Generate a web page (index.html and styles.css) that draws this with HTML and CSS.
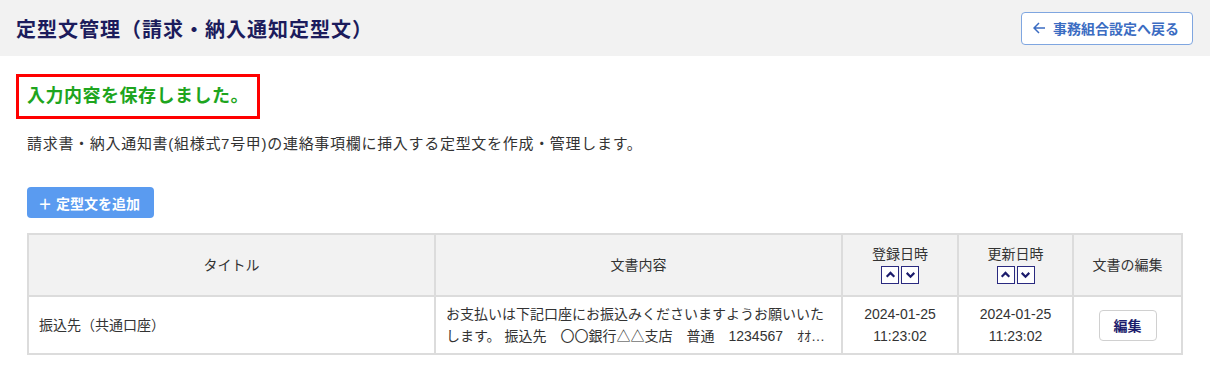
FILE: index.html
```html
<!DOCTYPE html>
<html lang="ja">
    <head>
        <meta charset="UTF-8">
        <meta name="viewport" content="width=device-width, initial-scale=1.0">
        <title>定型文管理</title>
        <link rel="stylesheet" href="styles.css">
    </head>
    <body>
        <div class="page-header">
            <h1>定型文管理（請求・納入通知定型文）</h1>
            <button class="back-btn" type="button">
                <svg width="13" height="12" viewBox="0 0 13 12"><path d="M12 6H1.5M6 1L1 6l5 5" fill="none" stroke="currentColor" stroke-width="1.5"/></svg>
                事務組合設定へ戻る
            </button>
        </div>

        <div class="content">
            <div class="notice">入力内容を保存しました。</div>

            <p class="desc">請求書・納入通知書(組様式7号甲)の連絡事項欄に挿入する定型文を作成・管理します。</p>

            <button class="add-btn" type="button"><span class="plus">＋</span>定型文を追加</button>

            <table class="list">
                <colgroup>
                    <col style="width: 407px">
                    <col style="width: 407px">
                    <col style="width: 116px">
                    <col style="width: 115px">
                    <col>
                </colgroup>
                <thead>
                    <tr>
                        <th>タイトル</th>
                        <th>文書内容</th>
                        <th>登録日時
                            <div class="sort">
                                <span class="sort-btn"><svg viewBox="0 0 12 12"><path d="M2.5 8L6 4.5 9.5 8" fill="none" stroke="currentColor" stroke-width="2"/></svg></span>
                                <span class="sort-btn"><svg viewBox="0 0 12 12"><path d="M2.5 4.5L6 8l3.5-3.5" fill="none" stroke="currentColor" stroke-width="2"/></svg></span>
                            </div>
                        </th>
                        <th>更新日時
                            <div class="sort">
                                <span class="sort-btn"><svg viewBox="0 0 12 12"><path d="M2.5 8L6 4.5 9.5 8" fill="none" stroke="currentColor" stroke-width="2"/></svg></span>
                                <span class="sort-btn"><svg viewBox="0 0 12 12"><path d="M2.5 4.5L6 8l3.5-3.5" fill="none" stroke="currentColor" stroke-width="2"/></svg></span>
                            </div>
                        </th>
                        <th>文書の編集</th>
                    </tr>
                </thead>
                <tbody>
                    <tr>
                        <td class="title-cell">振込先（共通口座）</td>
                        <td class="text-cell"><div class="clamp">お支払いは下記口座にお振込みくださいますようお願いいたします。 振込先　〇〇銀行△△支店　普通　1234567　ｵｵｻｶｼﾞﾑｸﾐｱｲ</div></td>
                        <td class="date-cell">2024-01-25<br>11:23:02</td>
                        <td class="date-cell">2024-01-25<br>11:23:02</td>
                        <td class="edit-cell"><button class="edit-btn" type="button">編集</button></td>
                    </tr>
                </tbody>
            </table>
        </div>
    </body>
</html>
```

FILE: styles.css
```css
body {
    margin: 0;
    font-family: "Liberation Sans", "Noto Sans CJK JP", sans-serif;
    color: #333;
    background: #fff;
}
.page-header {
    height: 56px;
    background: #f2f2f2;
    display: flex;
    align-items: center;
    justify-content: space-between;
    padding: 0 17px 0 16px;
}
h1 {
    margin: 0;
    font-size: 20px;
    font-weight: bold;
    letter-spacing: 1px;
    color: #1c1c5c;
}
.back-btn {
    display: flex;
    align-items: center;
    gap: 7px;
    height: 33px;
    padding: 0 13px 0 11px;
    background: #fff;
    border: 1px solid #7fa6e0;
    border-radius: 4px;
    color: #3b6cc2;
    font-family: inherit;
    font-size: 14px;
    font-weight: bold;
}
.content {
    padding: 18px 27px 0 27px;
}
.notice {
    display: inline-block;
    margin-left: -11px;
    border: 3px solid #ff0000;
    padding: 10px 8px 10px 8px;
    color: #1ea51e;
    font-size: 18px;
    font-weight: bold;
    letter-spacing: 0.5px;
    line-height: 19px;
}
.desc {
    margin: 15px 0 0 0;
    font-size: 15px;
    letter-spacing: 0.7px;
    line-height: 20px;
    color: #333;
}
.add-btn {
    display: block;
    margin-top: 33px;
    height: 31px;
    padding: 0 14px 0 11px;
    background: #5a9bf0;
    border: none;
    border-radius: 4px;
    color: #fff;
    font-family: inherit;
    font-size: 14px;
    font-weight: bold;
}
.plus {
    margin-right: 4px;
}
.list {
    margin-top: 15px;
    width: 1156px;
    border-collapse: collapse;
    table-layout: fixed;
    font-size: 14px;
}
.list th,
.list td {
    border: 2px solid #dcdcdc;
}
.list th {
    background: #f2f2f2;
    font-weight: normal;
    height: 58px;
    text-align: center;
    vertical-align: middle;
    line-height: 18px;
    color: #333;
}
.sort {
    display: flex;
    justify-content: center;
    gap: 2px;
    margin-top: 3px;
    margin-bottom: 2px;
}
.sort-btn {
    width: 16px;
    height: 16px;
    border: 1px solid #2a2a80;
    background: #fff;
    color: #1c1c6c;
    display: flex;
    align-items: center;
    justify-content: center;
}
.sort-btn svg {
    width: 13px;
    height: 13px;
}
.list td {
    height: 56px;
    padding: 0 10px;
    vertical-align: middle;
    line-height: 22px;
}
.text-cell .clamp {
    display: -webkit-box;
    -webkit-line-clamp: 2;
    -webkit-box-orient: vertical;
    overflow: hidden;
}
.date-cell,
.edit-cell {
    text-align: center;
}
.edit-btn {
    width: 58px;
    height: 31px;
    background: #fff;
    border: 1px solid #d0d0d0;
    border-radius: 4px;
    color: #1c1c6c;
    font-family: inherit;
    font-size: 14px;
    font-weight: bold;
}
```
